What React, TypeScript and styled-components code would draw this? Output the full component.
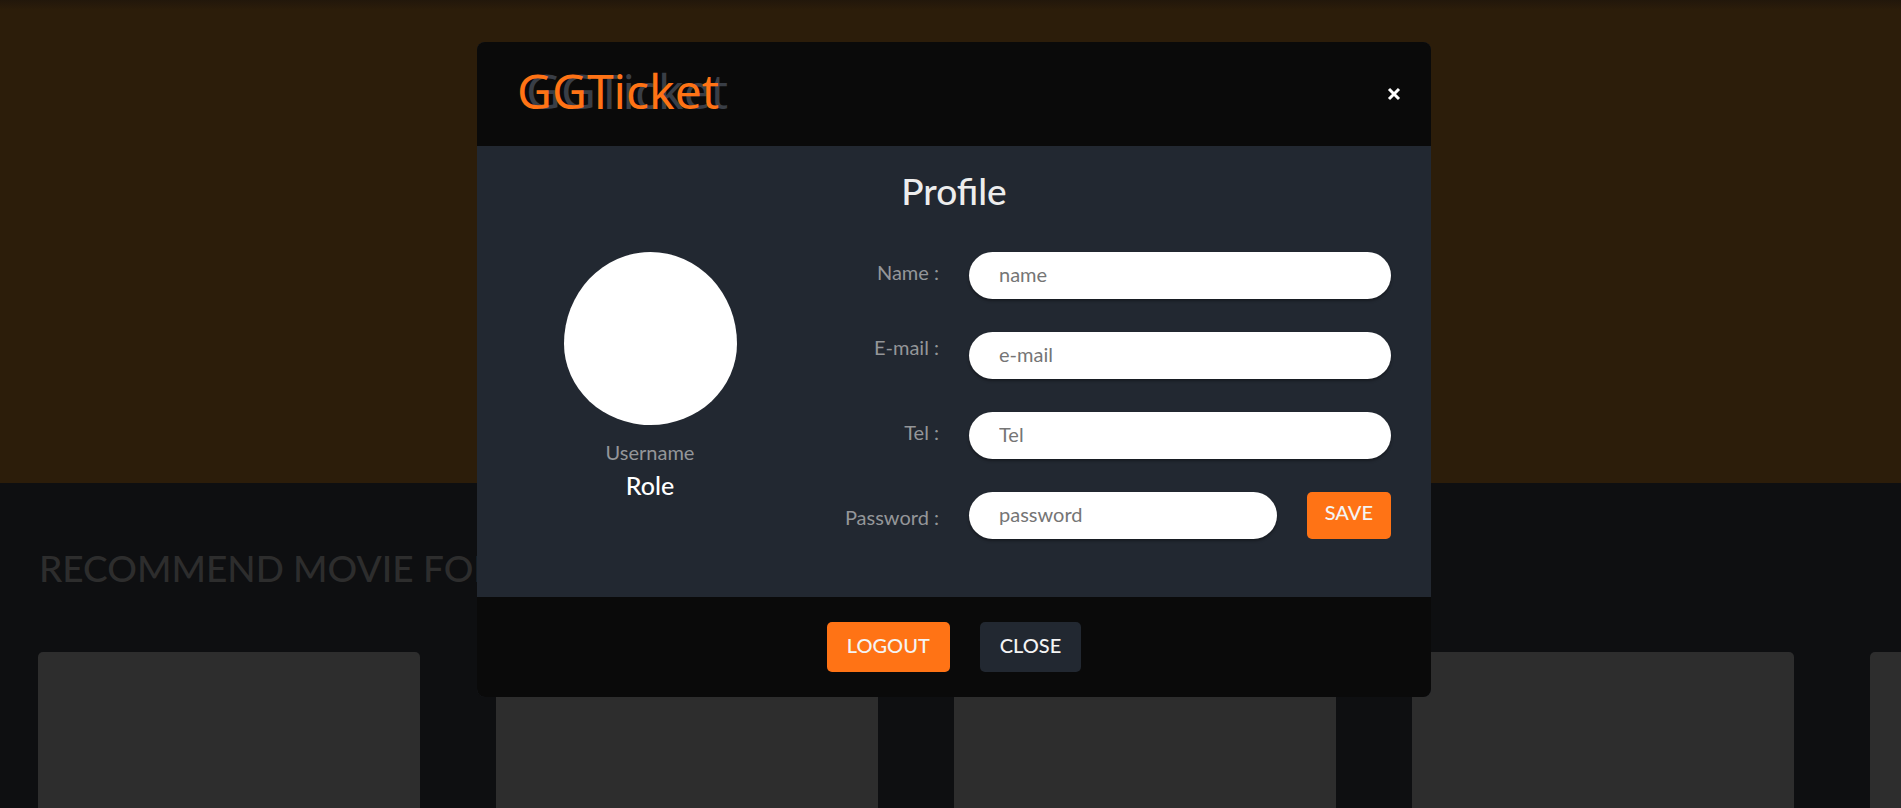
import React from "react";
import styled, { createGlobalStyle } from "styled-components";

const GlobalStyle = createGlobalStyle`
  *, *::before, *::after { box-sizing: border-box; }
  body {
    margin: 0;
    background: #0e0f11;
    color: #ededed;
    font-family: Lato, "Liberation Sans", sans-serif;
    font-size: 20px;
  }
`;

const Page = styled.div`
  display: flex;
  flex-direction: column;
  height: 100vh;
  overflow: hidden;
`;

const Hero = styled.section`
  flex: 0 0 483px;
  background: linear-gradient(#22170b, #2c1d0a 10px);
`;

const Recommended = styled.section`
  display: flex;
  flex: 1;
  flex-direction: column;
  min-height: 0;
  padding: 60px 0 0 2%;
  overflow: hidden;
`;

const SectionTitle = styled.h2`
  margin: 0;
  padding-left: 1px;
  font-size: 37px;
  font-weight: 500;
  line-height: 50px;
  color: #2d2d2d;
`;

const Carousel = styled.div`
  display: flex;
  flex: 1;
  gap: 76px;
  margin-top: 59px;
  overflow: hidden;
`;

const Poster = styled.div`
  flex: 0 0 382px;
  border-radius: 5px 5px 0 0;
  background: #2d2d2d;
`;

const Overlay = styled.div`
  position: fixed;
  inset: 0;
  display: flex;
  align-items: flex-start;
  justify-content: center;
  padding-top: 42px;
`;

const Dialog = styled.div`
  width: 954px;
  max-width: 96%;
  margin-left: 7px;
  border-radius: 8px;
  overflow: hidden;
  background: #222831;
`;

const Header = styled.header`
  display: flex;
  align-items: center;
  justify-content: space-between;
  height: 104px;
  padding: 0 30px 0 40px;
  background: #0a0a0a;
`;

const Logo = styled.h1`
  margin: 0 0 6px;
  font-family: "Noto Sans", sans-serif;
  font-size: 48px;
  font-weight: 400;
  line-height: 60px;
  color: #ff7315;
  text-shadow: 9px 0 0 #393e46;
`;

const IconButton = styled.button`
  display: flex;
  padding: 0;
  border: 0;
  background: none;
  color: #fff;
`;

const Content = styled.main`
  padding: 20px 40px 58px;
`;

const Title = styled.h2`
  margin: 0 0 36px;
  font-size: 37px;
  font-weight: 500;
  line-height: 50px;
  text-align: center;
`;

const Columns = styled.div`
  display: flex;
  justify-content: space-between;
`;

const Person = styled.div`
  display: flex;
  flex-direction: column;
  align-items: center;
  width: 266px;
`;

const Avatar = styled.div`
  width: 173px;
  height: 173px;
  margin-bottom: 11px;
  border-radius: 50% 50% 50% 50% / 53% 53% 47% 47%;
  background: #fff;
`;

const Username = styled.span`
  line-height: 32px;
  color: #949699;
`;

const Role = styled.span`
  font-size: 25px;
  font-weight: 500;
  line-height: 34px;
  color: #fff;
`;

const Form = styled.form`
  display: flex;
  gap: 30px;
`;

const Labels = styled.div`
  display: flex;
  flex-direction: column;
  gap: 60px;
  padding-top: 8px;
  text-align: right;
`;

const LabelPair = styled.div`
  display: flex;
  flex-direction: column;
  gap: 50px;
`;

const Label = styled.label`
  line-height: 25px;
  color: #949699;
`;

const Fields = styled.div`
  display: flex;
  flex-direction: column;
  gap: 33px;
  width: 422px;
`;

const FieldRow = styled.div`
  display: flex;
  gap: 30px;
`;

const Input = styled.input`
  flex: 1;
  min-width: 0;
  height: 47px;
  padding: 0 30px 3px;
  border: 0;
  border-radius: 24px;
  background: #fff;
  box-shadow: 0 2px 3px rgba(0, 0, 0, 0.35);
  font: inherit;
  &::placeholder { color: #757575; }
`;

const Button = styled.button<{ $tone?: string; $compact?: boolean }>`
  height: ${(p) => (p.$compact ? 47 : 50)}px;
  padding: ${(p) => (p.$compact ? "0 18px 8px" : "0 20px 4px")};
  border: 0;
  border-radius: 5px;
  background: ${(p) => p.$tone ?? "#ff7315"};
  color: #f4f4f4;
  font: inherit;
  font-weight: 500;
`;

const Footer = styled.footer`
  display: flex;
  align-items: center;
  justify-content: center;
  gap: 30px;
  height: 100px;
  background: #0a0a0a;
`;

export default function App() {
  return (
    <>
      <GlobalStyle />
      <Page>
        <Hero />
        <Recommended>
          <SectionTitle>RECOMMEND MOVIE FOR YOU</SectionTitle>
          <Carousel>
            {[1, 2, 3, 4, 5].map((n) => (
              <Poster key={n} />
            ))}
          </Carousel>
        </Recommended>
      </Page>
      <Overlay>
        <Dialog role="dialog" aria-labelledby="profile-title">
          <Header>
            <Logo>GGTicket</Logo>
            <IconButton type="button" aria-label="Close">
              <svg width="14" height="14" viewBox="0 0 14 14" fill="none" stroke="currentColor" strokeWidth="3">
                <path d="M2 2l10 10M12 2L2 12" />
              </svg>
            </IconButton>
          </Header>
          <Content>
            <Title id="profile-title">Profile</Title>
            <Columns>
              <Person>
                <Avatar />
                <Username>Username</Username>
                <Role>Role</Role>
              </Person>
              <Form>
                <Labels>
                  <LabelPair>
                    <Label htmlFor="name">Name :</Label>
                    <Label htmlFor="email">E-mail :</Label>
                  </LabelPair>
                  <Label htmlFor="tel">Tel :</Label>
                  <Label htmlFor="password">Password :</Label>
                </Labels>
                <Fields>
                  <FieldRow>
                    <Input id="name" placeholder="name" />
                  </FieldRow>
                  <FieldRow>
                    <Input id="email" type="email" placeholder="e-mail" />
                  </FieldRow>
                  <FieldRow>
                    <Input id="tel" type="tel" placeholder="Tel" />
                  </FieldRow>
                  <FieldRow>
                    <Input id="password" type="password" placeholder="password" />
                    <Button type="button" $compact>SAVE</Button>
                  </FieldRow>
                </Fields>
              </Form>
            </Columns>
          </Content>
          <Footer>
            <Button type="button">LOGOUT</Button>
            <Button type="button" $tone="#222831">CLOSE</Button>
          </Footer>
        </Dialog>
      </Overlay>
    </>
  );
}
